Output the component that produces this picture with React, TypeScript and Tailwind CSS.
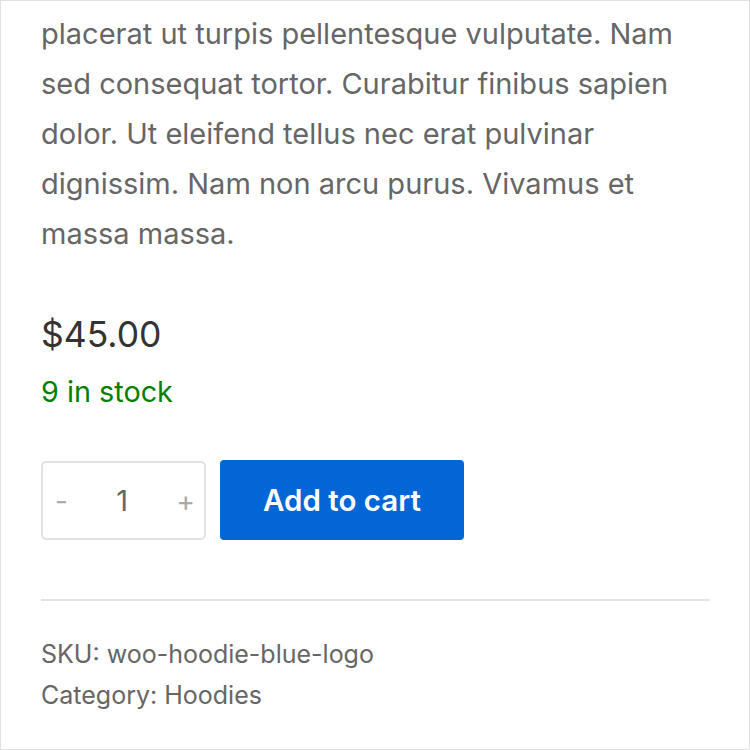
import React from "react";

export default function App() {
  return (
    <div
      className="w-[750px] h-[750px] bg-white border border-[#e2e2e2] overflow-hidden"
      style={{ fontFamily: "Inter, 'Noto Sans', sans-serif" }}
    >
      <div className="pl-[40px] pr-[40px] pt-[8px]">
        <p className="text-[29px] leading-[50px] text-[#666666] whitespace-nowrap">
          placerat ut turpis pellentesque vulputate. Nam
          <br />
          sed consequat tortor. Curabitur finibus sapien
          <br />
          dolor. Ut eleifend tellus nec erat pulvinar
          <br />
          dignissim. Nam non arcu purus. Vivamus et
          <br />
          massa massa.
        </p>
        <div className="mt-[52px] text-[35.5px] leading-[48px] text-[#333333]">$45.00</div>
        <div className="mt-[13px] text-[28.8px] leading-[40px] text-[#008000]">9 in stock</div>
        <div className="mt-[48px] flex items-start gap-[14px]">
          <div className="mt-[1px] w-[165px] h-[79px] border-2 border-[#e2e2e2] rounded-[5px] flex items-center justify-between pl-[12px] pr-[9px] text-[#666666]">
            <span className="text-[28px] text-[#aaaaaa]">-</span>
            <span className="text-[29px]">1</span>
            <span className="text-[28px] text-[#aaaaaa]">+</span>
          </div>
          <button className="w-[244px] h-[80px] bg-[#0366d6] rounded-[4px] text-white text-[29.5px] font-semibold">
            Add to cart
          </button>
        </div>
        <div className="mt-[59px] w-[669px] h-[2px] bg-[#e4e4e4]" />
        <div className="mt-[33px] text-[25px] leading-[41px] text-[#666666]">
          <div>SKU: woo-hoodie-blue-logo</div>
          <div>Category: Hoodies</div>
        </div>
      </div>
    </div>
  );
}
